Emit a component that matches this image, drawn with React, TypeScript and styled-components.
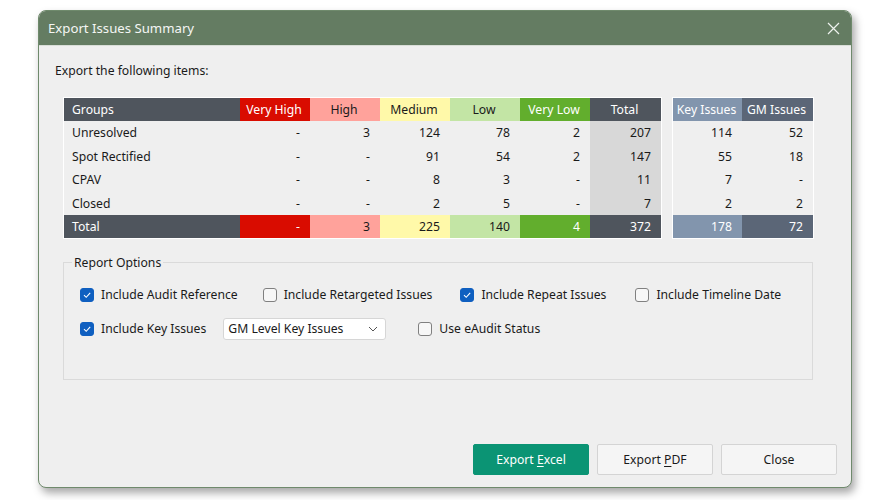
import * as React from 'react';
import styled, { createGlobalStyle } from 'styled-components';

const GlobalStyle = createGlobalStyle`
  html, body {
    margin: 0;
    padding: 0;
    background: #ffffff;
  }
  body {
    font-family: "Noto Sans", "Open Sans", sans-serif;
    color: #1a1a1a;
  }
`;

const Page = styled.div`
  width: 890px;
  height: 500px;
  padding: 10px 0 0 38px;
  box-sizing: border-box;
`;

const Window = styled.div`
  width: 814px;
  height: 478px;
  box-sizing: border-box;
  border: 1px solid #6f8a6c;
  border-radius: 8px;
  background: #efefef;
  box-shadow: 3px 5px 8px rgba(0, 0, 0, 0.35);
  display: flex;
  flex-direction: column;
  overflow: hidden;
`;

const TitleBar = styled.div`
  height: 35px;
  flex-shrink: 0;
  background: #647c62;
  border-bottom: 1px solid #d9ded8;
  display: flex;
  align-items: center;
  justify-content: space-between;
  padding: 0 10px 0 9px;
  box-sizing: border-box;
`;

const Title = styled.div`
  color: #f4f6f4;
  font-size: 13.2px;
`;

const CloseX = styled.button`
  border: none;
  background: transparent;
  padding: 0;
  width: 16px;
  height: 16px;
  display: flex;
  align-items: center;
  justify-content: center;
`;

const Content = styled.div`
  flex: 1;
  display: flex;
  flex-direction: column;
  padding: 16px 14px 12px 16px;
`;

const Intro = styled.div`
  font-size: 12.2px;
  margin-bottom: 18px;
`;

const Tables = styled.div`
  display: flex;
  gap: 10px;
  margin-left: 8px;
`;

const Grid = styled.div<{ $cols: string }>`
  display: grid;
  grid-template-columns: ${(p) => p.$cols};
  grid-template-rows: 23px repeat(4, 23.5px) 23px;
  border: 1px solid #ffffff;
  font-size: 12.2px;
`;

type Tone =
  | 'plain'
  | 'dark'
  | 'red'
  | 'pink'
  | 'yellow'
  | 'lime'
  | 'green'
  | 'grey'
  | 'slate'
  | 'navy';

const tones: Record<Tone, { bg: string; fg: string }> = {
  plain: { bg: 'transparent', fg: '#1a1a1a' },
  dark: { bg: '#4f555d', fg: '#ffffff' },
  red: { bg: '#d90c00', fg: '#ffffff' },
  pink: { bg: '#ffa29b', fg: '#1a1a1a' },
  yellow: { bg: '#fff9a9', fg: '#1a1a1a' },
  lime: { bg: '#c3e5a5', fg: '#1a1a1a' },
  green: { bg: '#62ae2d', fg: '#ffffff' },
  grey: { bg: '#d8d8d8', fg: '#1a1a1a' },
  slate: { bg: '#8295ad', fg: '#ffffff' },
  navy: { bg: '#5b6677', fg: '#ffffff' },
};

const Cell = styled.div<{ $tone: Tone; $align: 'left' | 'center' | 'right' }>`
  background: ${(p) => tones[p.$tone].bg};
  color: ${(p) => tones[p.$tone].fg};
  display: flex;
  align-items: center;
  justify-content: ${(p) =>
    p.$align === 'left' ? 'flex-start' : p.$align === 'center' ? 'center' : 'flex-end'};
  padding: 0 10px 0 8px;
  white-space: nowrap;
`;

const OptionsBox = styled.fieldset`
  margin: 15px 0 0 8px;
  width: 750px;
  height: 126px;
  box-sizing: border-box;
  border: 1px solid #dadada;
  padding: 13px 0 0 16px;
  display: flex;
  flex-direction: column;
  gap: 13px;
`;

const Legend = styled.legend`
  font-size: 12.2px;
  padding: 0 2px;
  margin-left: -8px;
`;

const OptionRow = styled.div`
  display: flex;
  align-items: center;
  height: 21px;
`;

const Check = styled.label<{ $gap?: number }>`
  display: flex;
  align-items: center;
  gap: 7px;
  font-size: 12.2px;
  margin-right: ${(p) => p.$gap ?? 28}px;
  white-space: nowrap;
`;

const Box = styled.span<{ $on: boolean }>`
  width: 14px;
  height: 14px;
  box-sizing: border-box;
  border-radius: 3px;
  background: ${(p) => (p.$on ? '#0f5fc0' : '#f7f7f7')};
  border: 1px solid ${(p) => (p.$on ? '#0f5fc0' : '#808080')};
  display: flex;
  align-items: center;
  justify-content: center;
`;

const Select = styled.div`
  width: 163px;
  height: 22px;
  box-sizing: border-box;
  background: #ffffff;
  border: 1px solid #d6d6d6;
  border-radius: 3px;
  display: flex;
  align-items: center;
  justify-content: space-between;
  padding: 0 7px 0 4px;
  font-size: 12.2px;
  margin-right: 32px;
`;

const Buttons = styled.div`
  margin-top: auto;
  display: flex;
  justify-content: flex-end;
  gap: 8px;
`;

const Button = styled.button<{ $primary?: boolean }>`
  width: 116px;
  height: 31px;
  box-sizing: border-box;
  font-family: inherit;
  font-size: 12.2px;
  border-radius: 2px;
  border: 1px solid ${(p) => (p.$primary ? '#0b9474' : '#d4d4d4')};
  background: ${(p) => (p.$primary ? '#0b9474' : '#f5f5f5')};
  color: ${(p) => (p.$primary ? '#ffffff' : '#1a1a1a')};
  u {
    text-decoration-thickness: 1px;
    text-underline-offset: 2px;
  }
`;

const Tick = () => (
  <svg width="10" height="10" viewBox="0 0 10 10">
    <path d="M2 5.2 L4.2 7.3 L8.2 2.8" fill="none" stroke="#ffffff" strokeWidth="1.1" />
  </svg>
);

const CheckItem = ({ on, label, gap }: { on: boolean; label: string; gap?: number }) => (
  <Check $gap={gap}>
    <Box $on={on}>{on && <Tick />}</Box>
    {label}
  </Check>
);

type Row = { name: string; values: string[]; side: string[] };

const rows: Row[] = [
  { name: 'Unresolved', values: ['-', '3', '124', '78', '2', '207'], side: ['114', '52'] },
  { name: 'Spot Rectified', values: ['-', '-', '91', '54', '2', '147'], side: ['55', '18'] },
  { name: 'CPAV', values: ['-', '-', '8', '3', '-', '11'], side: ['7', '-'] },
  { name: 'Closed', values: ['-', '-', '2', '5', '-', '7'], side: ['2', '2'] },
];

const totals = { values: ['-', '3', '225', '140', '4', '372'], side: ['178', '72'] };

const headers: { label: string; tone: Tone }[] = [
  { label: 'Very High', tone: 'red' },
  { label: 'High', tone: 'pink' },
  { label: 'Medium', tone: 'yellow' },
  { label: 'Low', tone: 'lime' },
  { label: 'Very Low', tone: 'green' },
  { label: 'Total', tone: 'dark' },
];

const sideHeaders: { label: string; tone: Tone }[] = [
  { label: 'Key Issues', tone: 'slate' },
  { label: 'GM Issues', tone: 'navy' },
];

export default function App() {
  return (
    <>
      <GlobalStyle />
      <Page>
        <Window>
          <TitleBar>
            <Title>Export Issues Summary</Title>
            <CloseX aria-label="Close">
              <svg width="13" height="13" viewBox="0 0 13 13">
                <path d="M1 1 L12 12 M12 1 L1 12" stroke="#eef2ee" strokeWidth="1.2" fill="none" />
              </svg>
            </CloseX>
          </TitleBar>
          <Content>
            <Intro>Export the following items:</Intro>
            <Tables>
              <Grid $cols="176px repeat(5, 70px) 71px">
                <Cell $tone="dark" $align="left">Groups</Cell>
                {headers.map((h) => (
                  <Cell key={h.label} $tone={h.tone} $align="center">
                    {h.label}
                  </Cell>
                ))}
                {rows.map((r) => (
                  <React.Fragment key={r.name}>
                    <Cell $tone="plain" $align="left">{r.name}</Cell>
                    {r.values.map((v, i) => (
                      <Cell key={i} $tone={i === 5 ? 'grey' : 'plain'} $align="right">
                        {v}
                      </Cell>
                    ))}
                  </React.Fragment>
                ))}
                <Cell $tone="dark" $align="left">Total</Cell>
                {totals.values.map((v, i) => (
                  <Cell key={i} $tone={headers[i].tone} $align="right">
                    {v}
                  </Cell>
                ))}
              </Grid>
              <Grid $cols="69px 71px">
                {sideHeaders.map((h) => (
                  <Cell key={h.label} $tone={h.tone} $align="center">
                    {h.label}
                  </Cell>
                ))}
                {rows.map((r) =>
                  r.side.map((v, i) => (
                    <Cell key={r.name + i} $tone="plain" $align="right">
                      {v}
                    </Cell>
                  ))
                )}
                {totals.side.map((v, i) => (
                  <Cell key={i} $tone={sideHeaders[i].tone} $align="right">
                    {v}
                  </Cell>
                ))}
              </Grid>
            </Tables>
            <OptionsBox>
              <Legend>Report Options</Legend>
              <OptionRow>
                <CheckItem on label="Include Audit Reference" gap={25} />
                <CheckItem on={false} label="Include Retargeted Issues" gap={28} />
                <CheckItem on label="Include Repeat Issues" gap={29} />
                <CheckItem on={false} label="Include Timeline Date" />
              </OptionRow>
              <OptionRow>
                <CheckItem on label="Include Key Issues" gap={17} />
                <Select>
                  <span>GM Level Key Issues</span>
                  <svg width="10" height="6" viewBox="0 0 10 6">
                    <path d="M1 1 L5 5 L9 1" fill="none" stroke="#555" strokeWidth="1" />
                  </svg>
                </Select>
                <CheckItem on={false} label="Use eAudit Status" />
              </OptionRow>
            </OptionsBox>
            <Buttons>
              <Button $primary>
                Export <u>E</u>xcel
              </Button>
              <Button>
                Export <u>P</u>DF
              </Button>
              <Button>Close</Button>
            </Buttons>
          </Content>
        </Window>
      </Page>
    </>
  );
}
